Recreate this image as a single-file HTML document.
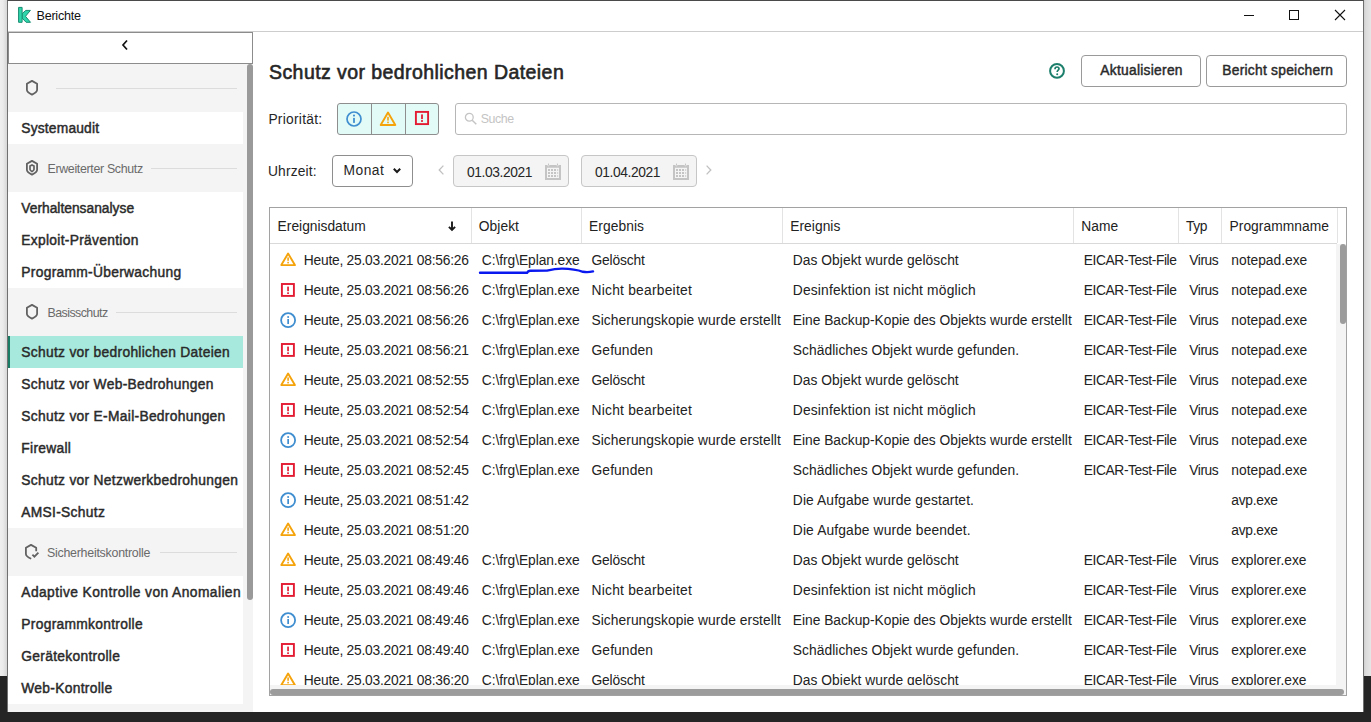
<!DOCTYPE html>
<html><head><meta charset="utf-8">
<style>
*{box-sizing:border-box;margin:0;padding:0}
html,body{width:1371px;height:722px;overflow:hidden;background:#ececec;font-family:"Liberation Sans",sans-serif;color:#262626;position:relative}
.abs{position:absolute}
.sbtxt{position:absolute;font-size:13.8px;color:#2a2a2a;white-space:nowrap;line-height:32px;letter-spacing:0.3px;margin-top:1px;-webkit-text-stroke:0.45px #2a2a2a}
.hdtxt{position:absolute;font-size:12px;color:#6a6a6a;white-space:nowrap;line-height:16px}
.witem{position:absolute;left:8px;width:235px;background:#fff}
.cell{position:absolute;white-space:nowrap;font-size:13.8px;line-height:30px;color:#222}
.hcell{position:absolute;white-space:nowrap;font-size:13.8px;line-height:35px;color:#222;top:208px}
.vdiv{position:absolute;top:208px;width:1px;height:35px;background:#e3e3e3}
.btn{position:absolute;border:1px solid #9a9a9a;border-radius:4px;background:#fff;font-weight:bold;font-size:14px;color:#262626;text-align:center;line-height:29px;white-space:nowrap}
</style></head><body>

<!-- desktop -->
<div class="abs" style="left:0;top:0;width:8px;height:676px;background:linear-gradient(to right,#efefef 0,#ebebeb 3px,#d6d6d6 7px)"></div>
<div class="abs" style="left:1363px;top:0;width:8px;height:676px;background:linear-gradient(to right,#c8c8c8 0,#dcdcdc 3px,#e6e6e6 8px)"></div>
<div class="abs" style="left:0;top:676px;width:1371px;height:46px;background:#252525"></div>
<!-- window -->
<div class="abs" style="left:7px;top:0;width:1357px;height:712px;background:#fff;border:1px solid #707070;border-top-color:#4a4a4a;border-bottom:none"></div>
<!-- title bar -->
<div class="abs" style="left:8px;top:31px;width:1355px;height:1px;background:#cdcdcd"></div>
<svg class="abs" style="left:0;top:0" width="40" height="30" viewBox="0 0 40 30"><path d="M22.1 13.7 L25.8 10.4 H30.4 L25.5 16.3 L30.5 22.3 H26.1 L22.1 18.1 Z" fill="#2fd6ac" stroke="#168b70" stroke-width="1" stroke-linejoin="round"/><rect x="18.6" y="7.4" width="3.5" height="14.9" fill="#2fd6ac" stroke="#168b70" stroke-width="1" stroke-linejoin="round"/></svg>
<div class="abs" style="left:36.5px;top:8px;font-size:12.6px;line-height:17px;letter-spacing:-0.25px;color:#111;white-space:nowrap">Berichte</div>
<div class="abs" style="left:1244px;top:15px;width:10px;height:1px;background:#111"></div>
<div class="abs" style="left:1289px;top:10px;width:10px;height:10px;border:1px solid #111"></div>
<svg class="abs" style="left:1334px;top:9px" width="12" height="12" viewBox="0 0 12 12"><path d="M1 1 L11 11 M11 1 L1 11" stroke="#111" stroke-width="1.1"/></svg>
<!-- sidebar -->
<div class="abs" style="left:8px;top:64px;width:245px;height:648px;background:#f4f4f4"></div>
<div class="abs" style="left:8px;top:32px;width:245px;height:32px;background:#fff;border:1px solid #8c8c8c"></div>
<svg class="abs" style="left:120px;top:39px" width="10" height="12" viewBox="0 0 10 12"><path d="M7 1.5 L3 6 L7 10.5" fill="none" stroke="#111" stroke-width="1.7"/></svg>
<!-- scrollbar sidebar -->
<div class="abs" style="left:247px;top:64px;width:6px;height:536px;background:#9a9a9a;border-radius:3px"></div>
<!-- sidebar groups -->
<svg class="abs" style="left:25px;top:79px" width="14" height="18" viewBox="0 0 14 18"><path d="M7 1.9 L12.1 4.8 V11 C12.1 12.4 9.2 14.5 7 15.6 C4.8 14.5 1.9 12.4 1.9 11 V4.8 Z" fill="none" stroke="#626262" stroke-width="1.8" stroke-linejoin="round"/></svg>
<div class="abs" style="left:56px;top:88px;width:181px;height:1px;background:#dcdcdc"></div>
<div class="witem" style="top:112px;height:32px"></div>
<div class="sbtxt" style="left:21.3px;top:112px;letter-spacing:0.18px">Systemaudit</div>

<svg class="abs" style="left:25px;top:159px" width="14" height="18" viewBox="0 0 14 18"><path d="M7 1.9 L12.1 4.8 V11 C12.1 12.4 9.2 14.5 7 15.6 C4.8 14.5 1.9 12.4 1.9 11 V4.8 Z" fill="none" stroke="#626262" stroke-width="1.8" stroke-linejoin="round"/><path d="M7 6 L9 7.1 V10.6 C9 11.2 7.9 12 7 12.6 C6.1 12 5 11.2 5 10.6 V7.1 Z" fill="none" stroke="#626262" stroke-width="1.7"/></svg>
<div class="hdtxt" style="left:47.5px;top:160.5px;font-size:12.4px;letter-spacing:-0.33px">Erweiterter Schutz</div>
<div class="abs" style="left:151px;top:168px;width:86px;height:1px;background:#dcdcdc"></div>
<div class="witem" style="top:192px;height:96px"></div>
<div class="sbtxt" style="left:21.3px;top:192px;letter-spacing:0px">Verhaltensanalyse</div>
<div class="sbtxt" style="left:21.3px;top:224px">Exploit-Prävention</div>
<div class="sbtxt" style="left:21.3px;top:256px">Programm-Überwachung</div>

<svg class="abs" style="left:25px;top:303px" width="14" height="18" viewBox="0 0 14 18"><path d="M7 1.9 L12.1 4.8 V11 C12.1 12.4 9.2 14.5 7 15.6 C4.8 14.5 1.9 12.4 1.9 11 V4.8 Z" fill="none" stroke="#626262" stroke-width="1.8" stroke-linejoin="round"/></svg>
<div class="hdtxt" style="left:47.5px;top:304.5px;font-size:12.4px;letter-spacing:-0.55px">Basisschutz</div>
<div class="abs" style="left:116px;top:312px;width:121px;height:1px;background:#dcdcdc"></div>
<div class="witem" style="top:336px;height:192px"></div>
<div class="abs" style="left:8px;top:336px;width:235px;height:32px;background:#a7eadd"></div>
<div class="abs" style="left:8px;top:336px;width:2px;height:32px;background:#1a7c64"></div>
<div class="sbtxt" style="left:21.3px;top:336px">Schutz vor bedrohlichen Dateien</div>
<div class="sbtxt" style="left:21.3px;top:368px">Schutz vor Web-Bedrohungen</div>
<div class="sbtxt" style="left:21.3px;top:400px">Schutz vor E-Mail-Bedrohungen</div>
<div class="sbtxt" style="left:21.3px;top:432px">Firewall</div>
<div class="sbtxt" style="left:21.3px;top:464px">Schutz vor Netzwerkbedrohungen</div>
<div class="sbtxt" style="left:21.3px;top:496px">AMSI-Schutz</div>

<svg class="abs" style="left:24px;top:543px" width="16" height="18" viewBox="0 0 16 18"><path d="M12.2 8.3 V4.8 L7 1.9 L1.9 4.8 V11 C1.9 12.4 4.6 14.6 7.2 15.8" fill="none" stroke="#626262" stroke-width="1.8" stroke-linejoin="round"/><path d="M8.4 11.6 L10.4 13.7 L14.4 9.6" fill="none" stroke="#626262" stroke-width="1.8"/></svg>
<div class="hdtxt" style="left:47px;top:544.5px;font-size:12.4px;letter-spacing:-0.25px">Sicherheitskontrolle</div>
<div class="abs" style="left:160px;top:552px;width:77px;height:1px;background:#dcdcdc"></div>
<div class="witem" style="top:576px;height:128px"></div>
<div class="sbtxt" style="left:21.3px;top:576px;letter-spacing:0.42px">Adaptive Kontrolle von Anomalien</div>
<div class="sbtxt" style="left:21.3px;top:608px">Programmkontrolle</div>
<div class="sbtxt" style="left:21.3px;top:640px">Gerätekontrolle</div>
<div class="sbtxt" style="left:21.3px;top:672px">Web-Kontrolle</div>

<!-- main header -->
<div class="abs" style="left:269px;top:62px;font-size:19.5px;line-height:20px;letter-spacing:0.43px;-webkit-text-stroke:0.6px #262626;white-space:nowrap;color:#262626">Schutz vor bedrohlichen Dateien</div>
<svg class="abs" style="left:1048px;top:62px" width="18" height="18" viewBox="0 0 18 18"><circle cx="9" cy="8.9" r="6.9" fill="none" stroke="#1c7f6b" stroke-width="2"/><path d="M7 7.2 C7 5.6 8 5 9 5 C10.1 5 11 5.7 11 6.8 C11 8.1 9.2 8.3 9.2 9.9" fill="none" stroke="#1c7f6b" stroke-width="1.7"/><circle cx="9.2" cy="12.2" r="1" fill="#1c7f6b"/></svg>
<div class="btn" style="left:1081px;top:55px;width:120px;height:32px"></div>
<div class="abs" style="left:1100.3px;top:60.5px;font-size:13.8px;line-height:20px;letter-spacing:0.27px;-webkit-text-stroke:0.45px #2a2a2a;white-space:nowrap;color:#2a2a2a">Aktualisieren</div>
<div class="btn" style="left:1206px;top:55px;width:141px;height:32px"></div>
<div class="abs" style="left:1222.3px;top:60.5px;font-size:13.8px;line-height:20px;letter-spacing:0.25px;-webkit-text-stroke:0.45px #2a2a2a;white-space:nowrap;color:#2a2a2a">Bericht speichern</div>

<div class="abs" style="left:268.4px;top:110px;font-size:13.8px;line-height:20px;letter-spacing:0.27px;white-space:nowrap">Priorität:</div>
<div class="abs" style="left:337px;top:103px;width:102px;height:32px;background:#e3fbf7;border:1px solid #8e8e8e;border-radius:3px"></div>
<div class="abs" style="left:371px;top:104px;width:1px;height:30px;background:#8e8e8e"></div>
<div class="abs" style="left:405px;top:104px;width:1px;height:30px;background:#8e8e8e"></div>
<svg class="abs" style="left:345px;top:110px" width="18" height="18" viewBox="0 0 18 18"><circle cx="9" cy="9" r="7" fill="none" stroke="#3f8ed0" stroke-width="1.7"/><rect x="8.1" y="7.9" width="1.8" height="5" fill="#3f8ed0"/><circle cx="9" cy="5.6" r="1.05" fill="#3f8ed0"/></svg>
<svg class="abs" style="left:379px;top:111px" width="18" height="16" viewBox="0 0 18 16"><path d="M9 1.6 L16.3 14 L1.7 14 Z" fill="none" stroke="#f5a30a" stroke-width="1.9" stroke-linejoin="round"/><rect x="8.2" y="5.8" width="1.6" height="3.8" fill="#f5a30a"/><rect x="8.2" y="10.6" width="1.6" height="1.6" fill="#f5a30a"/></svg>
<svg class="abs" style="left:413px;top:110px" width="18" height="16" viewBox="0 0 18 16"><rect x="2.9" y="1.9" width="12.2" height="12.2" fill="none" stroke="#e31b32" stroke-width="1.9"/><rect x="8.1" y="4.4" width="1.8" height="4.7" fill="#e31b32"/><rect x="8.1" y="10.1" width="1.8" height="1.8" fill="#e31b32"/></svg>

<div class="abs" style="left:455px;top:103px;width:892px;height:32px;border:1px solid #b6b6b6;border-radius:3px;background:#fff"></div>
<svg class="abs" style="left:463px;top:111px" width="16" height="16" viewBox="0 0 16 16"><circle cx="6.3" cy="6.3" r="3.9" fill="none" stroke="#c4c4c4" stroke-width="1.3"/><path d="M9.2 9.2 L13.3 13.3" stroke="#c4c4c4" stroke-width="1.5"/></svg>
<div class="abs" style="left:480.8px;top:109px;font-size:12.4px;line-height:20px;color:#c4c4c4;letter-spacing:-0.45px;white-space:nowrap">Suche</div>

<div class="abs" style="left:268px;top:161.5px;font-size:13.8px;line-height:20px;letter-spacing:0.14px;white-space:nowrap">Uhrzeit:</div>
<div class="abs" style="left:332px;top:155px;width:81px;height:32px;border:1px solid #8e8e8e;border-radius:4px;background:#fff"></div>
<div class="abs" style="left:343.6px;top:161px;font-size:13.8px;line-height:20px;letter-spacing:0.45px;white-space:nowrap">Monat</div>
<svg class="abs" style="left:392px;top:166px" width="10" height="10" viewBox="0 0 10 10"><path d="M1.8 2.8 L5 6 L8.2 2.8" fill="none" stroke="#1a1a1a" stroke-width="2"/></svg>
<svg class="abs" style="left:436px;top:164px" width="10" height="12" viewBox="0 0 10 12"><path d="M7.4 1.6 L3.2 6 L7.4 10.4" fill="none" stroke="#c0c0c0" stroke-width="1.3"/></svg>
<div class="abs" style="left:453px;top:155px;width:116px;height:32px;border:1px solid #c6c6c6;border-radius:4px;background:#f4f4f4"></div>
<div class="abs" style="left:467px;top:163px;font-size:13.8px;line-height:20px;letter-spacing:-0.4px;white-space:nowrap">01.03.2021</div>
<div class="abs" style="left:581px;top:155px;width:116px;height:32px;border:1px solid #c6c6c6;border-radius:4px;background:#f4f4f4"></div>
<div class="abs" style="left:595px;top:163px;font-size:13.8px;line-height:20px;letter-spacing:-0.4px;white-space:nowrap">01.04.2021</div>
<svg class="abs" style="left:704px;top:164px" width="10" height="12" viewBox="0 0 10 12"><path d="M2.6 1.6 L6.8 6 L2.6 10.4" fill="none" stroke="#c0c0c0" stroke-width="1.3"/></svg>
<svg class="abs" style="left:544px;top:163px" width="18" height="18" viewBox="0 0 18 18"><path d="M1 2 H3.2 L4.4 3.4 L5.6 2 H12.4 L13.6 3.4 L14.8 2 H17 V17 H1 Z M3 4.8 V15 H15 V4.8 Z" fill="#c4c4c4" fill-rule="evenodd"/><rect x="4" y="0.6" width="1" height="2" fill="#c4c4c4"/><rect x="13" y="0.6" width="1" height="2" fill="#c4c4c4"/><rect x="4" y="6" width="2" height="2" fill="#c4c4c4"/><rect x="7" y="6" width="2" height="2" fill="#c4c4c4"/><rect x="10" y="6" width="2" height="2" fill="#c4c4c4"/><rect x="4" y="9" width="2" height="2" fill="#c4c4c4"/><rect x="7" y="9" width="2" height="2" fill="#c4c4c4"/><rect x="10" y="9" width="2" height="2" fill="#c4c4c4"/><rect x="4" y="12" width="2" height="2" fill="#c4c4c4"/><rect x="7" y="12" width="2" height="2" fill="#c4c4c4"/><rect x="10" y="12" width="2" height="2" fill="#c4c4c4"/><circle cx="13.6" cy="7.0" r="0.75" fill="#c4c4c4"/><circle cx="13.6" cy="10.0" r="0.75" fill="#c4c4c4"/><circle cx="13.6" cy="13.0" r="0.75" fill="#c4c4c4"/></svg>
<svg class="abs" style="left:672px;top:163px" width="18" height="18" viewBox="0 0 18 18"><path d="M1 2 H3.2 L4.4 3.4 L5.6 2 H12.4 L13.6 3.4 L14.8 2 H17 V17 H1 Z M3 4.8 V15 H15 V4.8 Z" fill="#c4c4c4" fill-rule="evenodd"/><rect x="4" y="0.6" width="1" height="2" fill="#c4c4c4"/><rect x="13" y="0.6" width="1" height="2" fill="#c4c4c4"/><rect x="4" y="6" width="2" height="2" fill="#c4c4c4"/><rect x="7" y="6" width="2" height="2" fill="#c4c4c4"/><rect x="10" y="6" width="2" height="2" fill="#c4c4c4"/><rect x="4" y="9" width="2" height="2" fill="#c4c4c4"/><rect x="7" y="9" width="2" height="2" fill="#c4c4c4"/><rect x="10" y="9" width="2" height="2" fill="#c4c4c4"/><rect x="4" y="12" width="2" height="2" fill="#c4c4c4"/><rect x="7" y="12" width="2" height="2" fill="#c4c4c4"/><rect x="10" y="12" width="2" height="2" fill="#c4c4c4"/><circle cx="13.6" cy="7.0" r="0.75" fill="#c4c4c4"/><circle cx="13.6" cy="10.0" r="0.75" fill="#c4c4c4"/><circle cx="13.6" cy="13.0" r="0.75" fill="#c4c4c4"/></svg>

<!-- table frame -->
<div class="abs" style="left:269px;top:207px;width:1078px;height:489px;border:1px solid #a2a2a2;background:#fff"></div>
<div class="abs" style="left:270px;top:243px;width:1067px;height:1px;background:#d9d9d9"></div>
<div class="vdiv" style="left:471px"></div>
<div class="vdiv" style="left:581px"></div>
<div class="vdiv" style="left:782px"></div>
<div class="vdiv" style="left:1073px"></div>
<div class="vdiv" style="left:1178px"></div>
<div class="vdiv" style="left:1221px"></div>
<div class="vdiv" style="left:1337px"></div>
<div class="hcell" style="left:277.6px;top:216.5px;line-height:20px;letter-spacing:0px">Ereignisdatum</div>
<svg class="abs" style="left:446px;top:219px" width="12" height="14" viewBox="0 0 12 14"><path d="M6 2.4 V11 M2.9 7.9 L6 11 L9.1 7.9" fill="none" stroke="#1a1a1a" stroke-width="1.9"/></svg>
<div class="hcell" style="left:478.8px;top:216.5px;line-height:20px;letter-spacing:0.05px">Objekt</div>
<div class="hcell" style="left:589.1px;top:216.5px;line-height:20px;letter-spacing:0.05px">Ergebnis</div>
<div class="hcell" style="left:790.2px;top:216.5px;line-height:20px;letter-spacing:0.05px">Ereignis</div>
<div class="hcell" style="left:1081.2px;top:216.5px;line-height:20px;letter-spacing:0.05px">Name</div>
<div class="hcell" style="left:1186px;top:216.5px;line-height:20px;letter-spacing:-0.4px">Typ</div>
<div class="hcell" style="left:1229.5px;top:216.5px;line-height:20px;letter-spacing:0.05px">Programmname</div>

<div class="abs" id="tbody" style="left:0;top:0;width:1371px;height:685px;clip-path:inset(244px 0 0 0)">
<svg class="abs" style="left:280px;top:252px" width="17" height="15" viewBox="0 0 17 15"><path d="M8.1 1.5 L14.9 13.1 L1.3 13.1 Z" fill="none" stroke="#f5a30a" stroke-width="1.9" stroke-linejoin="round"/><rect x="7.3" y="5.4" width="1.6" height="3.4" fill="#f5a30a"/><rect x="7.3" y="9.8" width="1.6" height="1.6" fill="#f5a30a"/></svg>
<div class="cell" style="left:303.8px;top:246.0px;letter-spacing:-0.240px">Heute, 25.03.2021 08:56:26</div>
<div class="cell" style="left:481.8px;top:246.0px;letter-spacing:-0.067px">C:\frg\Eplan.exe</div>
<div class="cell" style="left:591.5px;top:246.0px;letter-spacing:-0.143px">Gelöscht</div>
<div class="cell" style="left:792.8px;top:246.0px;letter-spacing:0.042px">Das Objekt wurde gelöscht</div>
<div class="cell" style="left:1083.8px;top:246.0px;letter-spacing:-0.414px">EICAR-Test-File</div>
<div class="cell" style="left:1189.2px;top:246.0px;letter-spacing:-0.400px">Virus</div>
<div class="cell" style="left:1231.3px;top:246.0px;letter-spacing:0.000px">notepad.exe</div>
<svg class="abs" style="left:280px;top:283px" width="15" height="15" viewBox="0 0 15 15"><rect x="1.9" y="1" width="12" height="11.9" fill="none" stroke="#e31b32" stroke-width="1.9"/><rect x="7.2" y="3.6" width="1.7" height="4.6" fill="#e31b32"/><rect x="7.2" y="9.3" width="1.7" height="1.7" fill="#e31b32"/></svg>
<div class="cell" style="left:303.8px;top:276.0px;letter-spacing:-0.240px">Heute, 25.03.2021 08:56:26</div>
<div class="cell" style="left:481.8px;top:276.0px;letter-spacing:-0.067px">C:\frg\Eplan.exe</div>
<div class="cell" style="left:591.5px;top:276.0px;letter-spacing:0.240px">Nicht bearbeitet</div>
<div class="cell" style="left:792.8px;top:276.0px;letter-spacing:0.172px">Desinfektion ist nicht möglich</div>
<div class="cell" style="left:1083.8px;top:276.0px;letter-spacing:-0.414px">EICAR-Test-File</div>
<div class="cell" style="left:1189.2px;top:276.0px;letter-spacing:-0.400px">Virus</div>
<div class="cell" style="left:1231.3px;top:276.0px;letter-spacing:0.000px">notepad.exe</div>
<svg class="abs" style="left:280px;top:312px" width="17" height="17" viewBox="0 0 17 17"><circle cx="8.1" cy="8.2" r="7" fill="none" stroke="#3f8ed0" stroke-width="1.8"/><rect x="7.3" y="7" width="1.7" height="5" fill="#3f8ed0"/><circle cx="8.15" cy="4.9" r="1" fill="#3f8ed0"/></svg>
<div class="cell" style="left:303.8px;top:306.0px;letter-spacing:-0.240px">Heute, 25.03.2021 08:56:26</div>
<div class="cell" style="left:481.8px;top:306.0px;letter-spacing:-0.067px">C:\frg\Eplan.exe</div>
<div class="cell" style="left:591.5px;top:306.0px;letter-spacing:0.048px">Sicherungskopie wurde erstellt</div>
<div class="cell" style="left:792.8px;top:306.0px;letter-spacing:-0.023px">Eine Backup-Kopie des Objekts wurde erstellt</div>
<div class="cell" style="left:1083.8px;top:306.0px;letter-spacing:-0.414px">EICAR-Test-File</div>
<div class="cell" style="left:1189.2px;top:306.0px;letter-spacing:-0.400px">Virus</div>
<div class="cell" style="left:1231.3px;top:306.0px;letter-spacing:0.000px">notepad.exe</div>
<svg class="abs" style="left:280px;top:343px" width="15" height="15" viewBox="0 0 15 15"><rect x="1.9" y="1" width="12" height="11.9" fill="none" stroke="#e31b32" stroke-width="1.9"/><rect x="7.2" y="3.6" width="1.7" height="4.6" fill="#e31b32"/><rect x="7.2" y="9.3" width="1.7" height="1.7" fill="#e31b32"/></svg>
<div class="cell" style="left:303.8px;top:336.0px;letter-spacing:-0.240px">Heute, 25.03.2021 08:56:21</div>
<div class="cell" style="left:481.8px;top:336.0px;letter-spacing:-0.067px">C:\frg\Eplan.exe</div>
<div class="cell" style="left:591.5px;top:336.0px;letter-spacing:0.114px">Gefunden</div>
<div class="cell" style="left:792.8px;top:336.0px;letter-spacing:0.048px">Schädliches Objekt wurde gefunden.</div>
<div class="cell" style="left:1083.8px;top:336.0px;letter-spacing:-0.414px">EICAR-Test-File</div>
<div class="cell" style="left:1189.2px;top:336.0px;letter-spacing:-0.400px">Virus</div>
<div class="cell" style="left:1231.3px;top:336.0px;letter-spacing:0.000px">notepad.exe</div>
<svg class="abs" style="left:280px;top:372px" width="17" height="15" viewBox="0 0 17 15"><path d="M8.1 1.5 L14.9 13.1 L1.3 13.1 Z" fill="none" stroke="#f5a30a" stroke-width="1.9" stroke-linejoin="round"/><rect x="7.3" y="5.4" width="1.6" height="3.4" fill="#f5a30a"/><rect x="7.3" y="9.8" width="1.6" height="1.6" fill="#f5a30a"/></svg>
<div class="cell" style="left:303.8px;top:366.0px;letter-spacing:-0.240px">Heute, 25.03.2021 08:52:55</div>
<div class="cell" style="left:481.8px;top:366.0px;letter-spacing:-0.067px">C:\frg\Eplan.exe</div>
<div class="cell" style="left:591.5px;top:366.0px;letter-spacing:-0.143px">Gelöscht</div>
<div class="cell" style="left:792.8px;top:366.0px;letter-spacing:0.042px">Das Objekt wurde gelöscht</div>
<div class="cell" style="left:1083.8px;top:366.0px;letter-spacing:-0.414px">EICAR-Test-File</div>
<div class="cell" style="left:1189.2px;top:366.0px;letter-spacing:-0.400px">Virus</div>
<div class="cell" style="left:1231.3px;top:366.0px;letter-spacing:0.000px">notepad.exe</div>
<svg class="abs" style="left:280px;top:403px" width="15" height="15" viewBox="0 0 15 15"><rect x="1.9" y="1" width="12" height="11.9" fill="none" stroke="#e31b32" stroke-width="1.9"/><rect x="7.2" y="3.6" width="1.7" height="4.6" fill="#e31b32"/><rect x="7.2" y="9.3" width="1.7" height="1.7" fill="#e31b32"/></svg>
<div class="cell" style="left:303.8px;top:396.0px;letter-spacing:-0.240px">Heute, 25.03.2021 08:52:54</div>
<div class="cell" style="left:481.8px;top:396.0px;letter-spacing:-0.067px">C:\frg\Eplan.exe</div>
<div class="cell" style="left:591.5px;top:396.0px;letter-spacing:0.240px">Nicht bearbeitet</div>
<div class="cell" style="left:792.8px;top:396.0px;letter-spacing:0.172px">Desinfektion ist nicht möglich</div>
<div class="cell" style="left:1083.8px;top:396.0px;letter-spacing:-0.414px">EICAR-Test-File</div>
<div class="cell" style="left:1189.2px;top:396.0px;letter-spacing:-0.400px">Virus</div>
<div class="cell" style="left:1231.3px;top:396.0px;letter-spacing:0.000px">notepad.exe</div>
<svg class="abs" style="left:280px;top:432px" width="17" height="17" viewBox="0 0 17 17"><circle cx="8.1" cy="8.2" r="7" fill="none" stroke="#3f8ed0" stroke-width="1.8"/><rect x="7.3" y="7" width="1.7" height="5" fill="#3f8ed0"/><circle cx="8.15" cy="4.9" r="1" fill="#3f8ed0"/></svg>
<div class="cell" style="left:303.8px;top:426.0px;letter-spacing:-0.240px">Heute, 25.03.2021 08:52:54</div>
<div class="cell" style="left:481.8px;top:426.0px;letter-spacing:-0.067px">C:\frg\Eplan.exe</div>
<div class="cell" style="left:591.5px;top:426.0px;letter-spacing:0.048px">Sicherungskopie wurde erstellt</div>
<div class="cell" style="left:792.8px;top:426.0px;letter-spacing:-0.023px">Eine Backup-Kopie des Objekts wurde erstellt</div>
<div class="cell" style="left:1083.8px;top:426.0px;letter-spacing:-0.414px">EICAR-Test-File</div>
<div class="cell" style="left:1189.2px;top:426.0px;letter-spacing:-0.400px">Virus</div>
<div class="cell" style="left:1231.3px;top:426.0px;letter-spacing:0.000px">notepad.exe</div>
<svg class="abs" style="left:280px;top:463px" width="15" height="15" viewBox="0 0 15 15"><rect x="1.9" y="1" width="12" height="11.9" fill="none" stroke="#e31b32" stroke-width="1.9"/><rect x="7.2" y="3.6" width="1.7" height="4.6" fill="#e31b32"/><rect x="7.2" y="9.3" width="1.7" height="1.7" fill="#e31b32"/></svg>
<div class="cell" style="left:303.8px;top:456.0px;letter-spacing:-0.240px">Heute, 25.03.2021 08:52:45</div>
<div class="cell" style="left:481.8px;top:456.0px;letter-spacing:-0.067px">C:\frg\Eplan.exe</div>
<div class="cell" style="left:591.5px;top:456.0px;letter-spacing:0.114px">Gefunden</div>
<div class="cell" style="left:792.8px;top:456.0px;letter-spacing:0.048px">Schädliches Objekt wurde gefunden.</div>
<div class="cell" style="left:1083.8px;top:456.0px;letter-spacing:-0.414px">EICAR-Test-File</div>
<div class="cell" style="left:1189.2px;top:456.0px;letter-spacing:-0.400px">Virus</div>
<div class="cell" style="left:1231.3px;top:456.0px;letter-spacing:0.000px">notepad.exe</div>
<svg class="abs" style="left:280px;top:492px" width="17" height="17" viewBox="0 0 17 17"><circle cx="8.1" cy="8.2" r="7" fill="none" stroke="#3f8ed0" stroke-width="1.8"/><rect x="7.3" y="7" width="1.7" height="5" fill="#3f8ed0"/><circle cx="8.15" cy="4.9" r="1" fill="#3f8ed0"/></svg>
<div class="cell" style="left:303.8px;top:486.0px;letter-spacing:-0.240px">Heute, 25.03.2021 08:51:42</div>
<div class="cell" style="left:792.8px;top:486.0px;letter-spacing:0.119px">Die Aufgabe wurde gestartet.</div>
<div class="cell" style="left:1231.3px;top:486.0px;letter-spacing:-0.267px">avp.exe</div>
<svg class="abs" style="left:280px;top:522px" width="17" height="15" viewBox="0 0 17 15"><path d="M8.1 1.5 L14.9 13.1 L1.3 13.1 Z" fill="none" stroke="#f5a30a" stroke-width="1.9" stroke-linejoin="round"/><rect x="7.3" y="5.4" width="1.6" height="3.4" fill="#f5a30a"/><rect x="7.3" y="9.8" width="1.6" height="1.6" fill="#f5a30a"/></svg>
<div class="cell" style="left:303.8px;top:516.0px;letter-spacing:-0.240px">Heute, 25.03.2021 08:51:20</div>
<div class="cell" style="left:792.8px;top:516.0px;letter-spacing:0.144px">Die Aufgabe wurde beendet.</div>
<div class="cell" style="left:1231.3px;top:516.0px;letter-spacing:-0.267px">avp.exe</div>
<svg class="abs" style="left:280px;top:552px" width="17" height="15" viewBox="0 0 17 15"><path d="M8.1 1.5 L14.9 13.1 L1.3 13.1 Z" fill="none" stroke="#f5a30a" stroke-width="1.9" stroke-linejoin="round"/><rect x="7.3" y="5.4" width="1.6" height="3.4" fill="#f5a30a"/><rect x="7.3" y="9.8" width="1.6" height="1.6" fill="#f5a30a"/></svg>
<div class="cell" style="left:303.8px;top:546.0px;letter-spacing:-0.240px">Heute, 25.03.2021 08:49:46</div>
<div class="cell" style="left:481.8px;top:546.0px;letter-spacing:-0.067px">C:\frg\Eplan.exe</div>
<div class="cell" style="left:591.5px;top:546.0px;letter-spacing:-0.143px">Gelöscht</div>
<div class="cell" style="left:792.8px;top:546.0px;letter-spacing:0.042px">Das Objekt wurde gelöscht</div>
<div class="cell" style="left:1083.8px;top:546.0px;letter-spacing:-0.414px">EICAR-Test-File</div>
<div class="cell" style="left:1189.2px;top:546.0px;letter-spacing:-0.400px">Virus</div>
<div class="cell" style="left:1231.3px;top:546.0px;letter-spacing:0.000px">explorer.exe</div>
<svg class="abs" style="left:280px;top:583px" width="15" height="15" viewBox="0 0 15 15"><rect x="1.9" y="1" width="12" height="11.9" fill="none" stroke="#e31b32" stroke-width="1.9"/><rect x="7.2" y="3.6" width="1.7" height="4.6" fill="#e31b32"/><rect x="7.2" y="9.3" width="1.7" height="1.7" fill="#e31b32"/></svg>
<div class="cell" style="left:303.8px;top:576.0px;letter-spacing:-0.240px">Heute, 25.03.2021 08:49:46</div>
<div class="cell" style="left:481.8px;top:576.0px;letter-spacing:-0.067px">C:\frg\Eplan.exe</div>
<div class="cell" style="left:591.5px;top:576.0px;letter-spacing:0.240px">Nicht bearbeitet</div>
<div class="cell" style="left:792.8px;top:576.0px;letter-spacing:0.172px">Desinfektion ist nicht möglich</div>
<div class="cell" style="left:1083.8px;top:576.0px;letter-spacing:-0.414px">EICAR-Test-File</div>
<div class="cell" style="left:1189.2px;top:576.0px;letter-spacing:-0.400px">Virus</div>
<div class="cell" style="left:1231.3px;top:576.0px;letter-spacing:0.000px">explorer.exe</div>
<svg class="abs" style="left:280px;top:612px" width="17" height="17" viewBox="0 0 17 17"><circle cx="8.1" cy="8.2" r="7" fill="none" stroke="#3f8ed0" stroke-width="1.8"/><rect x="7.3" y="7" width="1.7" height="5" fill="#3f8ed0"/><circle cx="8.15" cy="4.9" r="1" fill="#3f8ed0"/></svg>
<div class="cell" style="left:303.8px;top:606.0px;letter-spacing:-0.240px">Heute, 25.03.2021 08:49:46</div>
<div class="cell" style="left:481.8px;top:606.0px;letter-spacing:-0.067px">C:\frg\Eplan.exe</div>
<div class="cell" style="left:591.5px;top:606.0px;letter-spacing:0.048px">Sicherungskopie wurde erstellt</div>
<div class="cell" style="left:792.8px;top:606.0px;letter-spacing:-0.023px">Eine Backup-Kopie des Objekts wurde erstellt</div>
<div class="cell" style="left:1083.8px;top:606.0px;letter-spacing:-0.414px">EICAR-Test-File</div>
<div class="cell" style="left:1189.2px;top:606.0px;letter-spacing:-0.400px">Virus</div>
<div class="cell" style="left:1231.3px;top:606.0px;letter-spacing:0.000px">explorer.exe</div>
<svg class="abs" style="left:280px;top:643px" width="15" height="15" viewBox="0 0 15 15"><rect x="1.9" y="1" width="12" height="11.9" fill="none" stroke="#e31b32" stroke-width="1.9"/><rect x="7.2" y="3.6" width="1.7" height="4.6" fill="#e31b32"/><rect x="7.2" y="9.3" width="1.7" height="1.7" fill="#e31b32"/></svg>
<div class="cell" style="left:303.8px;top:636.0px;letter-spacing:-0.240px">Heute, 25.03.2021 08:49:40</div>
<div class="cell" style="left:481.8px;top:636.0px;letter-spacing:-0.067px">C:\frg\Eplan.exe</div>
<div class="cell" style="left:591.5px;top:636.0px;letter-spacing:0.114px">Gefunden</div>
<div class="cell" style="left:792.8px;top:636.0px;letter-spacing:0.048px">Schädliches Objekt wurde gefunden.</div>
<div class="cell" style="left:1083.8px;top:636.0px;letter-spacing:-0.414px">EICAR-Test-File</div>
<div class="cell" style="left:1189.2px;top:636.0px;letter-spacing:-0.400px">Virus</div>
<div class="cell" style="left:1231.3px;top:636.0px;letter-spacing:0.000px">explorer.exe</div>
<svg class="abs" style="left:280px;top:672px" width="17" height="15" viewBox="0 0 17 15"><path d="M8.1 1.5 L14.9 13.1 L1.3 13.1 Z" fill="none" stroke="#f5a30a" stroke-width="1.9" stroke-linejoin="round"/><rect x="7.3" y="5.4" width="1.6" height="3.4" fill="#f5a30a"/><rect x="7.3" y="9.8" width="1.6" height="1.6" fill="#f5a30a"/></svg>
<div class="cell" style="left:303.8px;top:666.0px;letter-spacing:-0.240px">Heute, 25.03.2021 08:36:20</div>
<div class="cell" style="left:481.8px;top:666.0px;letter-spacing:-0.067px">C:\frg\Eplan.exe</div>
<div class="cell" style="left:591.5px;top:666.0px;letter-spacing:-0.143px">Gelöscht</div>
<div class="cell" style="left:792.8px;top:666.0px;letter-spacing:0.042px">Das Objekt wurde gelöscht</div>
<div class="cell" style="left:1083.8px;top:666.0px;letter-spacing:-0.414px">EICAR-Test-File</div>
<div class="cell" style="left:1189.2px;top:666.0px;letter-spacing:-0.400px">Virus</div>
<div class="cell" style="left:1231.3px;top:666.0px;letter-spacing:0.000px">explorer.exe</div>
</div>
<!-- table scrollbars -->
<div class="abs" style="left:1336px;top:244px;width:10px;height:441px;background:#f4f4f4"></div>
<div class="abs" style="left:1340px;top:244px;width:6px;height:80px;background:#9c9c9c;border-radius:3px"></div>
<div class="abs" style="left:270px;top:685px;width:1076px;height:10px;background:#f4f4f4"></div>
<div class="abs" style="left:270px;top:689px;width:1074px;height:6px;background:#9c9c9c;border-radius:3px"></div>
<!-- pen underline -->
<svg class="abs" style="left:0;top:0" width="700" height="300" viewBox="0 0 700 300"><path d="M480 272.8 L527 272.8 Q528 271 530 270.8 L547 270.6 Q555 268.6 562 268.6 Q575 268.8 583 271.8 Q588 272.6 593 271.4" fill="none" stroke="#0a18f0" stroke-width="2.4" stroke-linecap="round" stroke-linejoin="round"/></svg>

</body></html>
